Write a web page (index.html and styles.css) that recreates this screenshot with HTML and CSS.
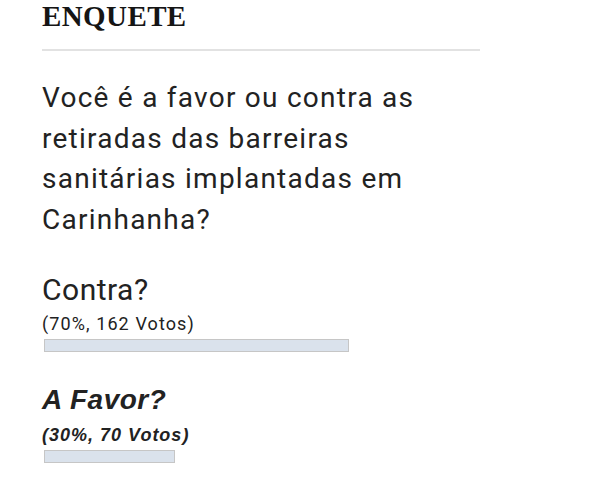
FILE: index.html
```html
<!DOCTYPE html>
<html lang="pt">
<head>
<meta charset="utf-8">
<title>Enquete</title>
<link rel="stylesheet" href="styles.css">
</head>
<body>
<div class="poll">
  <h2 class="poll-title">ENQUETE</h2>
  <p class="poll-question">Você é a favor ou contra as retiradas das barreiras sanitárias implantadas em Carinhanha?</p>
  <div class="option">
    <div class="option-label">Contra?</div>
    <div class="option-votes">(70%, 162 Votos)</div>
    <div class="bar-track"><div class="bar" style="width:70%"></div></div>
  </div>
  <div class="option option-selected">
    <div class="option-label">A Favor?</div>
    <div class="option-votes">(30%, 70 Votos)</div>
    <div class="bar-track"><div class="bar" style="width:30%"></div></div>
  </div>
</div>
</body>
</html>
```
FILE: styles.css
```css
html, body {
  margin: 0;
  padding: 0;
  background: #ffffff;
}

.poll {
  width: 438px;
  padding-left: 42px;
  color: #222222;
  font-family: Roboto, "Liberation Sans", Arial, sans-serif;
}

.poll-title {
  margin: 0;
  font-family: "Liberation Serif", "Times New Roman", serif;
  font-weight: bold;
  font-size: 29px;
  line-height: 32px;
  letter-spacing: 0.4px;
  color: #151515;
  padding-bottom: 17px;
  border-bottom: 2px solid #e2e2e2;
}

.poll-question {
  margin: 27px 0 0 0;
  font-size: 28px;
  line-height: 40.6px;
  letter-spacing: 1.25px;
}

.option {
  margin-top: 30px;
}

.option-label {
  font-size: 30px;
  line-height: 40px;
  letter-spacing: 0.5px;
}

.option-votes {
  margin-top: 4px;
  font-size: 18px;
  line-height: 20px;
  letter-spacing: 1.1px;
}

.option-selected {
  margin-top: 28px;
}

.option-selected .option-label,
.option-selected .option-votes {
  font-style: italic;
  font-weight: bold;
  font-family: "Liberation Sans", Arial, sans-serif;
}

.option-selected .option-label {
  font-size: 28px;
  letter-spacing: 0.5px;
}

.option-selected .option-votes {
  margin-top: 5px;
  letter-spacing: 1px;
}

.bar-track {
  margin: 5px 0 0 2px;
  width: 436px;
}

.bar {
  box-sizing: border-box;
  height: 13px;
  background: #dae2ec;
  border: 1px solid #c6c6c6;
}
```
